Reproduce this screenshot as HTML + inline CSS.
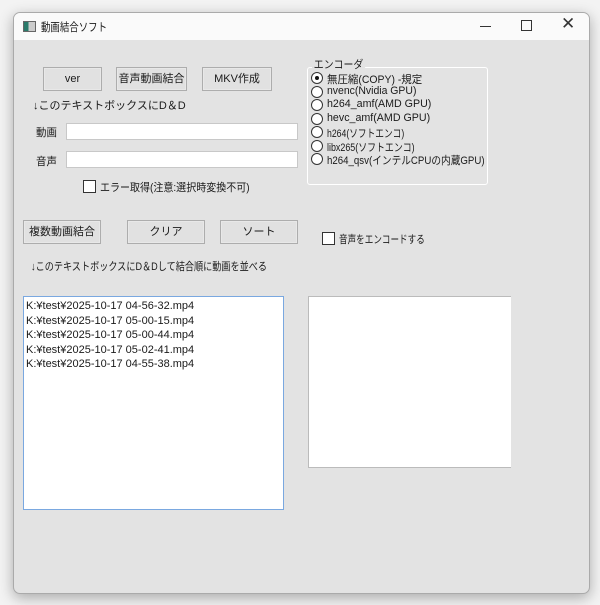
<!DOCTYPE html>
<html><head><meta charset="utf-8"><style>
body{margin:0;width:600px;height:605px;background:#f3f3f3;position:relative;overflow:hidden;font-family:"Liberation Sans","Noto Sans CJK JP",sans-serif;font-size:11px;color:#1a1a1a}
.win{position:absolute;left:13px;top:12px;width:575px;height:580px;background:#e3e3e3;border:1px solid #aaa;border-radius:7px;box-shadow:0 4px 14px rgba(0,0,0,.3);overflow:hidden}
.tb{position:absolute;left:0;top:0;right:0;height:27px;background:#fafafa}
.a{position:absolute;white-space:nowrap;transform-origin:0 50%}
.btn{position:absolute;background:#e1e1e1;border:1px solid #adadad;box-shadow:inset 0 0 0 1px #e8e8e8;display:flex;align-items:center;justify-content:center;font-size:11px;line-height:1;white-space:nowrap}
.in{position:absolute;background:#fff;border:1px solid #c8c8c8}
.cb{position:absolute;width:11px;height:11px;border:1px solid #333;background:#fff}
.rd{position:absolute;width:10px;height:10px;border:1px solid #333;border-radius:50%;background:#fff}
</style></head><body>
<div class="win">
 <div class="tb">
  <div class="a" style="left:9px;top:8px;width:11px;height:9px;border:1px solid #666;background:linear-gradient(90deg,#2a7a6a 40%,#ccc 40%)"></div>
  <div class="a" style="left:27px;top:6px;font-size:11.5px;transform:scaleX(.82)">動画結合ソフト</div>
  <div class="a" style="left:466px;top:13px;width:11px;height:1px;background:#333"></div>
  <div class="a" style="left:507px;top:7px;width:9px;height:9px;border:1px solid #333"></div>
  <div class="a" style="left:547px;top:1px;font-size:17px;color:#333">✕</div>
 </div>
 <div style="position:absolute;left:-14px;top:-13px">
  <div class="btn" style="left:43px;top:67px;width:57px;height:22px">ver</div>
  <div class="btn" style="left:116px;top:67px;width:69px;height:22px">音声動画結合</div>
  <div class="btn" style="left:202px;top:67px;width:68px;height:22px">MKV作成</div>
  <div class="a" style="left:33px;top:97px">↓このテキストボックスにD＆D</div>
  <div class="a" style="left:36px;top:124px;transform:scaleX(.95)">動画</div>
  <div class="in" style="left:66px;top:123px;width:230px;height:15px"></div>
  <div class="a" style="left:36px;top:153px;transform:scaleX(.95)">音声</div>
  <div class="in" style="left:66px;top:151px;width:230px;height:15px"></div>
  <div class="cb" style="left:83px;top:180px"></div>
  <div class="a" style="left:100px;top:179px;transform:scaleX(.91)">エラー取得(注意:選択時変換不可)</div>
  <div class="a" style="left:307px;top:67px;width:179px;height:116px;border:1px solid #fff;border-radius:3px"></div>
  <div class="a" style="left:312px;top:56px;background:#e3e3e3;padding:0 2px;transform:scaleX(.9)">エンコーダ</div>
  <div class="rd" style="left:311px;top:72px"><div style="position:absolute;left:3px;top:3px;width:4px;height:4px;border-radius:50%;background:#111"></div></div>
  <div class="a" style="left:327px;top:71px;transform:scaleX(.95)">無圧縮(COPY) -規定</div>
  <div class="rd" style="left:311px;top:86px"></div><div class="a" style="left:327px;top:85px;transform:scaleX(.95)">nvenc(Nvidia GPU)</div>
  <div class="rd" style="left:311px;top:99px"></div><div class="a" style="left:327px;top:98px;transform:scaleX(.97)">h264_amf(AMD GPU)</div>
  <div class="rd" style="left:311px;top:113px"></div><div class="a" style="left:327px;top:112px;transform:scaleX(.97)">hevc_amf(AMD GPU)</div>
  <div class="rd" style="left:311px;top:126px"></div><div class="a" style="left:327px;top:125px;transform:scaleX(.79)">h264(ソフトエンコ)</div>
  <div class="rd" style="left:311px;top:140px"></div><div class="a" style="left:327px;top:139px;transform:scaleX(.81)">libx265(ソフトエンコ)</div>
  <div class="rd" style="left:311px;top:153px"></div><div class="a" style="left:327px;top:152px;transform:scaleX(.88)">h264_qsv(インテルCPUの内蔵GPU)</div>
  <div class="btn" style="left:23px;top:220px;width:76px;height:22px">複数動画結合</div>
  <div class="btn" style="left:127px;top:220px;width:76px;height:22px">クリア</div>
  <div class="btn" style="left:220px;top:220px;width:76px;height:22px">ソート</div>
  <div class="cb" style="left:322px;top:232px"></div>
  <div class="a" style="left:339px;top:231px;transform:scaleX(.78)">音声をエンコードする</div>
  <div class="a" style="left:31px;top:258px;transform:scaleX(.83)">↓このテキストボックスにD＆Dして結合順に動画を並べる</div>
  <div class="a" style="left:23px;top:296px;width:259px;height:210px;background:#fff;border:1px solid #7aa8e0;line-height:14.6px;padding-top:2px;text-indent:2px">
   <div>K:¥test¥2025-10-17 04-56-32.mp4</div>
   <div>K:¥test¥2025-10-17 05-00-15.mp4</div>
   <div>K:¥test¥2025-10-17 05-00-44.mp4</div>
   <div>K:¥test¥2025-10-17 05-02-41.mp4</div>
   <div>K:¥test¥2025-10-17 04-55-38.mp4</div>
  </div>
  <div class="a" style="left:308px;top:296px;width:202px;height:170px;background:#fff;border:1px solid #bbb;border-right:none"></div>
 </div>
</div>
</body></html>
